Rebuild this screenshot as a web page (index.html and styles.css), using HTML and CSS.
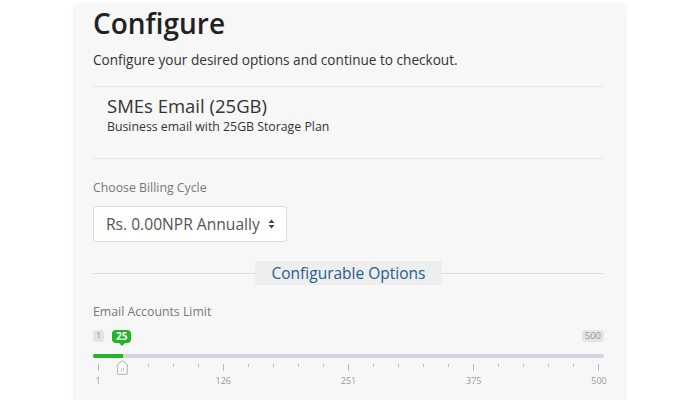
FILE: index.html
```html
<!DOCTYPE html>
<html>
<head>
<meta charset="utf-8">
<link rel="stylesheet" href="styles.css">
</head>
<body>
<div class="panel">
  <h1 class="title">Configure</h1>
  <p class="lead">Configure your desired options and continue to checkout.</p>
  <div class="product">
    <div class="product-name">SMEs Email (25GB)</div>
    <div class="product-desc">Business email with 25GB Storage Plan</div>
  </div>
  <div class="field">
    <div class="label">Choose Billing Cycle</div>
    <div class="select">
      <span>Rs. 0.00NPR Annually</span>
      <svg class="caret" width="7" height="10" viewBox="0 0 7 10"><path d="M0.5 4 L3.5 0.5 L6.5 4 Z M0.5 6 L3.5 9.5 L6.5 6 Z" fill="#444"/></svg>
    </div>
  </div>
  <div class="divider"><span class="divider-title">Configurable Options</span></div>
  <div class="option">
    <div class="label">Email Accounts Limit</div>
    <div class="slider">
      <div class="badges">
        <span class="badge">1</span>
        <span class="badge">500</span>
      </div>
      <span class="bubble">25</span>
      <div class="track"><div class="fill"></div></div>
      <svg class="handle" width="11" height="15" viewBox="0 0 11 15"><path d="M5.5 0.7 L10.3 4.5 L10.3 13 Q10.3 14.3 9 14.3 L2 14.3 Q0.7 14.3 0.7 13 L0.7 4.5 Z" fill="#fff" stroke="#a8adb5" stroke-width="1"/><path d="M4.5 8 V11.5 M6.5 8 V11.5" stroke="#b5bac1" stroke-width="0.8"/></svg>
      <div class="ticks">
        <i class="big"></i><i></i><i></i><i></i><i></i>
        <i class="big"></i><i></i><i></i><i></i><i></i>
        <i class="big"></i><i></i><i></i><i></i><i></i>
        <i class="big"></i><i></i><i></i><i></i><i></i>
        <i class="big"></i>
      </div>
      <div class="tick-labels">
        <span>1</span><span>126</span><span>251</span><span>375</span><span>500</span>
      </div>
    </div>
  </div>
</div>
</body>
</html>
```

FILE: styles.css
```css
* { box-sizing: border-box; }
html, body { margin: 0; padding: 0; background: #fff; }
body {
  font-family: "Open Sans", "DejaVu Sans", sans-serif;
  color: #333;
  width: 700px;
  height: 400px;
  overflow: hidden;
}
.panel {
  margin: 5px 0 0 75px;
  width: 549px;
  height: 420px;
  background: #f7f7f7;
  box-shadow: 0 0 5px rgba(0,0,0,0.1);
  border-radius: 3px;
  padding: 0 20px 0 18px;
}
.title {
  margin: 0;
  font-size: 28px;
  font-weight: 600;
  line-height: 36px;
  color: #222;
}
.lead {
  margin: 9px 0 0;
  font-size: 13.6px;
  line-height: 20px;
  color: #333;
}
.product {
  margin-top: 16px;
  border-top: 1px solid #e6e6e6;
  border-bottom: 1px solid #e6e6e6;
  padding: 7px 14px 0;
  height: 73px;
}
.product-name {
  font-size: 18.5px;
  line-height: 24px;
  color: #333;
}
.product-desc {
  font-size: 12.3px;
  line-height: 17px;
  color: #333;
}
.field { margin-top: 20px; }
.label {
  font-size: 12.3px;
  line-height: 18px;
  color: #777;
}
.select {
  margin-top: 9px;
  width: 194px;
  height: 36px;
  background: #fff;
  border: 1px solid #ddd;
  border-radius: 3px;
  display: flex;
  align-items: center;
  padding: 0 12px;
  gap: 8px;
  font-size: 15.6px;
  color: #555;
  white-space: nowrap;
}
.caret { flex: none; }
.divider {
  margin-top: 19px;
  height: 24px;
  display: flex;
  justify-content: center;
  align-items: center;
  background: linear-gradient(#ddd, #ddd) center / 100% 1px no-repeat;
}
.divider-title {
  background: #eeeeee;
  color: #23608f;
  font-size: 15.5px;
  line-height: 24px;
  width: 187px;
  text-align: center;
}
.option { margin-top: 18px; }
.slider {
  position: relative;
  margin-top: 3px;
  height: 70px;
}
.badges {
  display: flex;
  justify-content: space-between;
  padding-top: 6px;
}
.badge {
  background: #e1e4e9;
  color: #999;
  font-size: 9.5px;
  line-height: 12px;
  padding: 0 3px;
  border-radius: 3px;
}
.bubble {
  position: absolute;
  left: 19px;
  top: 6px;
  background: #20b426;
  color: #fff;
  font-size: 10px;
  font-weight: 700;
  line-height: 13px;
  padding: 0 4px;
  border-radius: 4px;
}
.bubble::after {
  content: "";
  position: absolute;
  left: 50%;
  bottom: -3px;
  margin-left: -3px;
  border: 3px solid transparent;
  border-bottom: 0;
  border-top-color: #20b426;
}
.track {
  margin-top: 12px;
  height: 4px;
  border-radius: 2px;
  background: #d1d6e0;
}
.fill {
  width: 30px;
  height: 4px;
  border-radius: 2px 0 0 2px;
  background: #20b426;
}
.handle {
  position: absolute;
  left: 24px;
  top: 36px;
}
.ticks {
  margin-top: 6px;
  padding: 0 5px;
  display: flex;
  justify-content: space-between;
  align-items: flex-start;
}
.ticks i {
  width: 1px;
  height: 3px;
  background: #b8bcc4;
}
.ticks i.big { height: 7px; }
.tick-labels {
  margin: 4px -10px 0;
  display: flex;
  justify-content: space-between;
}
.tick-labels span {
  width: 30px;
  text-align: center;
  font-size: 9px;
  line-height: 12px;
  color: #999;
}
```
